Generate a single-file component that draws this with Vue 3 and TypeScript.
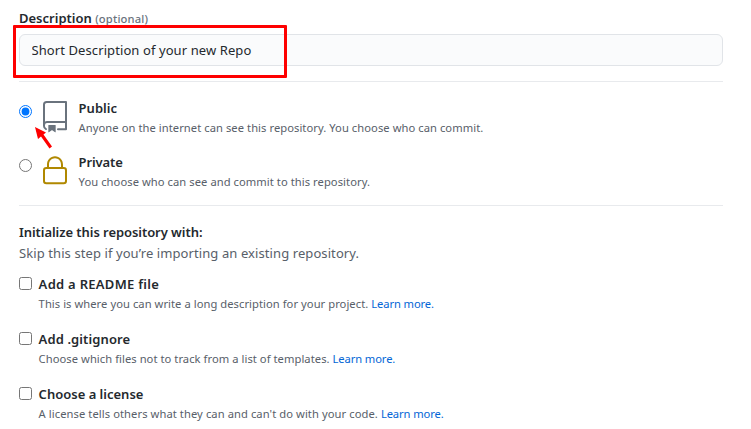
<script setup lang="ts">
import { ref } from 'vue'

interface InitOption {
  id: string
  title: string
  note: string
}

const description = ref('Short Description of your new Repo')
const visibility = ref<'public' | 'private'>('public')
const selected = ref<string[]>([])

const options: InitOption[] = [
  { id: 'readme', title: 'Add a README file', note: 'This is where you can write a long description for your project.' },
  { id: 'gitignore', title: 'Add .gitignore', note: 'Choose which files not to track from a list of templates.' },
  { id: 'license', title: 'Choose a license', note: "A license tells others what they can and can't do with your code." },
]
</script>

<template>
  <main class="form">
    <label class="field-label" for="description">Description <span class="optional">(optional)</span></label>
    <input id="description" v-model="description" class="field" type="text" />
    <hr class="rule" />

    <section class="visibility">
      <label class="choice">
        <input v-model="visibility" class="radio" type="radio" value="public" />
        <svg class="icon repo" viewBox="0 0 24 24" width="32" height="32">
          <path fill-rule="evenodd" d="M3 2.75A2.75 2.75 0 015.75 0h14.5a.75.75 0 01.75.75v20.5a.75.75 0 01-.75.75h-6a.75.75 0 010-1.5h5.25v-4H6A1.5 1.5 0 004.5 18v.75c0 .716.43 1.334 1.05 1.605a.75.75 0 01-.6 1.374A3.25 3.25 0 013 18.75v-16zM19.5 1.5V15H6c-.546 0-1.059.146-1.5.401V2.75c0-.69.56-1.25 1.25-1.25H19.5z" />
          <path d="M7 18.25a.25.25 0 01.25-.25h5a.25.25 0 01.25.25v5.01a.25.25 0 01-.397.201l-2.206-1.604a.25.25 0 00-.294 0L7.397 23.46a.25.25 0 01-.397-.2v-5.01z" />
        </svg>
        <span class="text">
          <span class="title">Public</span>
          <span class="note">Anyone on the internet can see this repository. You choose who can commit.</span>
        </span>
      </label>
      <label class="choice">
        <input v-model="visibility" class="radio" type="radio" value="private" />
        <svg class="icon lock" viewBox="0 0 24 24" width="32" height="32">
          <path fill-rule="evenodd" d="M6 9V7.25C6 3.845 8.503 1 12 1s6 2.845 6 6.25V9h.5a2.5 2.5 0 012.5 2.5v8a2.5 2.5 0 01-2.5 2.5h-13A2.5 2.5 0 013 19.5v-8A2.5 2.5 0 015.5 9H6zm1.5-1.75C7.5 4.58 9.422 2.5 12 2.5c2.578 0 4.5 2.08 4.5 4.75V9h-9V7.25zm-3 4.25a1 1 0 011-1h13a1 1 0 011 1v8a1 1 0 01-1 1h-13a1 1 0 01-1-1v-8z" />
        </svg>
        <span class="text">
          <span class="title private">Private</span>
          <span class="note">You choose who can see and commit to this repository.</span>
        </span>
      </label>
    </section>
    <hr class="rule" />

    <section class="init">
      <h2 class="title heading">Initialize this repository with:</h2>
      <p class="skip">Skip this step if you’re importing an existing repository.</p>
      <label v-for="option in options" :key="option.id" class="option">
        <input v-model="selected" class="checkbox" type="checkbox" :value="option.id" />
        <span class="text">
          <span class="title" :class="option.id">{{ option.title }}</span>
          <span class="note" :class="option.id + '-note'">{{ option.note }} <a class="link" href="#">Learn more.</a></span>
        </span>
      </label>
    </section>

    <div class="highlight"></div>
    <svg class="arrow" viewBox="0 0 20 24" width="20" height="24">
      <path d="M1 1L12 6.500L9.500 8.500L18 20.500L15.500 22.500L7 10.500L4 13Z" />
    </svg>
  </main>
</template>

<style>
body {
  margin: 0;
  background: #fff;
  overflow: hidden;
}
</style>

<style scoped>
.form {
  position: relative;
  box-sizing: border-box;
  width: 751px;
  height: 429px;
  padding: 8px 28px 0 19px;
  overflow: hidden;
  font-family: "Noto Sans", "Open Sans", sans-serif;
  font-size: 13px;
  line-height: 21px;
  color: #24292e;
}
.field-label {
  display: block;
  height: 26px;
  font-weight: 600;
}
.optional {
  font-size: 11.2px;
  font-weight: 500;
  letter-spacing: 0.17px;
  color: #6a737d;
}
.field {
  display: block;
  box-sizing: border-box;
  width: 100%;
  height: 32px;
  padding: 0 12px 0 11.5px;
  border: 1px solid #e1e4e8;
  border-radius: 6px;
  background: #fafbfc;
  font: inherit;
  letter-spacing: 0.09px;
  color: #24292e;
  outline: none;
}
.rule {
  height: 1px;
  margin: 15px 0 0;
  border: 0;
  background: #e8eaed;
}
.visibility {
  display: flex;
  flex-direction: column;
  padding-top: 15px;
  height: 108px;
  box-sizing: border-box;
}
.choice {
  display: grid;
  grid-template-columns: 20px 40px 1fr;
  height: 54px;
  flex: none;
}
.radio {
  width: 13px;
  height: 13px;
  margin: 8px 0 0;
}
.icon {
  margin-top: 4px;
}
.repo {
  fill: #6a737d;
}
.lock {
  fill: #b08800;
}
.text {
  display: flex;
  flex-direction: column;
  padding-top: 1px;
  margin-left: -0.4px;
}
.title {
  height: 21px;
  font-size: 13px;
  font-weight: 600;
  white-space: nowrap;
}
.private {
  letter-spacing: -0.12px;
}
.readme {
  letter-spacing: 0.28px;
}
.gitignore {
  letter-spacing: 0.1px;
}
.note {
  height: 18px;
  font-size: 11.2px;
  line-height: 18px;
  letter-spacing: 0.055px;
  color: #586069;
  white-space: nowrap;
}
.readme-note,
.gitignore-note {
  letter-spacing: 0.05px;
}
.license-note {
  letter-spacing: 0.072px;
}
.init {
  padding-top: 16px;
}
.heading {
  margin: 0;
  letter-spacing: -0.06px;
}
.skip {
  height: 21px;
  margin: 0 0 9px;
  letter-spacing: 0.09px;
  color: #586069;
}
.option {
  display: grid;
  grid-template-columns: 20px 1fr;
  height: 55px;
}
.checkbox {
  width: 13px;
  height: 13px;
  margin: 4px 0 0;
}
.link {
  letter-spacing: -0.1px;
  color: #0366d6;
  text-decoration: none;
}
.highlight {
  position: absolute;
  left: 13px;
  top: 25px;
  box-sizing: border-box;
  width: 274px;
  height: 53px;
  border: 3px solid #fe0000;
  border-radius: 1px;
}
.arrow {
  position: absolute;
  left: 34px;
  top: 126px;
  fill: #fe0000;
}
</style>
